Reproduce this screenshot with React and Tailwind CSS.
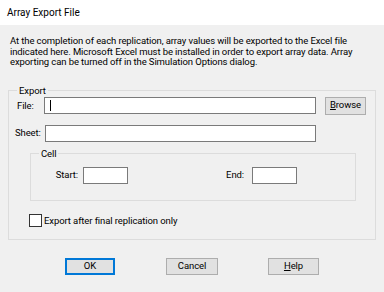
const font = { fontFamily: "Roboto, 'Liberation Sans', sans-serif" };

function Field({ className }) {
  return <div className={`h-[17px] border border-[#7a7a7a] bg-white ${className}`} />;
}

function Button({ children, className = "", primary = false }) {
  return (
    <button
      className={`flex h-[17px] items-center justify-center bg-[#e1e1e1] text-[#000] ${
        primary ? "border-2 border-[#0078d7]" : "border border-[#adadad]"
      } ${className}`}
    >
      {children}
    </button>
  );
}

export default function App() {
  return (
    <div
      className="flex h-[292px] w-[384px] flex-col bg-[#f0f0f0] text-[9.5px] tracking-[-0.1px] text-[#000]"
      style={font}
    >
      {/* title bar */}
      <div className="flex h-[25px] shrink-0 items-center bg-white pl-[7px] text-[10px] tracking-normal">
        Array Export File
      </div>

      <p className="mt-[11px] px-[10px] leading-[10.5px]">
        At the completion of each replication, array values will be exported to the Excel file
        indicated here. Microsoft Excel must be installed in order to export array data. Array
        exporting can be turned off in the Simulation Options dialog.
      </p>

      <fieldset className="ml-[8px] mt-[16px] w-[368px] border border-[#dcdcdc] pb-[11px]">
        <legend className="ml-[8px] px-[2px] leading-[13px]">Export</legend>

        <div className="flex items-start">
          <span className="w-[35px] pl-[8px] pt-[2px]">File:</span>
          <div className="flex h-[17px] w-[272px] items-center border border-[#7a7a7a] bg-white pl-[5px]">
            <span className="h-[11px] w-px bg-black" />
          </div>
          <Button className="ml-[9px] h-[18px] w-[41px]">
            <span>
              <span className="underline">B</span>rowse
            </span>
          </Button>
        </div>

        <div className="mt-[10px] flex items-center">
          <span className="w-[36px] pl-[6px]">Sheet:</span>
          <Field className="w-[271px]" />
        </div>

        <fieldset className="ml-[21px] mt-[5px] w-[326px] border border-[#dcdcdc] pb-[16px]">
          <legend className="ml-[8px] px-[2px] leading-[13px]">Cell</legend>
          <div className="mt-[7px] flex items-center">
            <span className="w-[52px] pr-[5px] text-right">Start:</span>
            <Field className="w-[45px]" />
            <span className="w-[124px] pr-[8px] text-right">End:</span>
            <Field className="w-[45px]" />
          </div>
        </fieldset>

        <label className="ml-[20px] mt-[13px] flex items-center gap-[2px]">
          <span className="h-[13px] w-[13px] border border-[#333] bg-white" />
          <span>Export after final replication only</span>
        </label>
      </fieldset>

      <div className="mt-[18px] flex items-start">
        <Button primary className="ml-[65px] w-[50px]">OK</Button>
        <Button className="ml-[51px] w-[52px]">Cancel</Button>
        <Button className="ml-[50px] w-[51px]">
          <span>
            <span className="underline">H</span>elp
          </span>
        </Button>
      </div>
    </div>
  );
}
